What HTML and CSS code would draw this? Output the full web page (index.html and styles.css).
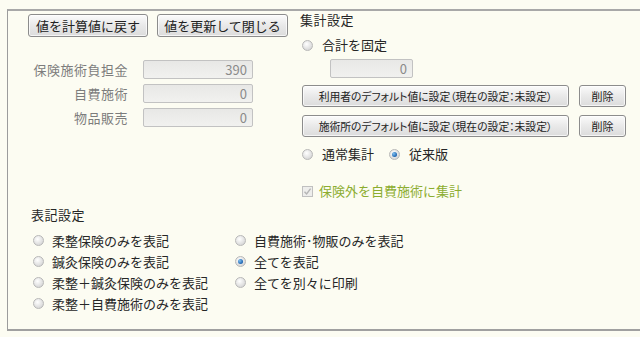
FILE: index.html
```html
<!DOCTYPE html>
<html lang="ja">
<head>
    <meta charset="UTF-8">
    <title>集計設定</title>
    <link rel="stylesheet" href="styles.css">
</head>
<body>

    <div class="frame">
        <div class="top">
            <!-- 左側：操作ボタンと金額 -->
            <div class="left">
                <div class="actions">
                    <button class="btn btn-reset">値を計算値に戻す</button>
                    <button class="btn btn-close">値を更新して閉じる</button>
                </div>

                <div class="fields">
                    <div class="field">
                        <label>保険施術負担金</label>
                        <input class="amount" type="text" value="390" disabled>
                    </div>
                    <div class="field">
                        <label>自費施術</label>
                        <input class="amount" type="text" value="0" disabled>
                    </div>
                    <div class="field">
                        <label>物品販売</label>
                        <input class="amount" type="text" value="0" disabled>
                    </div>
                </div>
            </div>

            <!-- 右側：集計設定 -->
            <div class="right">
                <div class="heading">集計設定</div>

                <label class="radio"><span class="dot"></span>合計を固定</label>
                <input class="amount total" type="text" value="0" disabled>

                <div class="default-row">
                    <button class="btn btn-wide">利用者のデフォルト値に設定（現在の設定：未設定）</button>
                    <button class="btn btn-del">削除</button>
                </div>
                <div class="default-row">
                    <button class="btn btn-wide">施術所のデフォルト値に設定（現在の設定：未設定）</button>
                    <button class="btn btn-del">削除</button>
                </div>

                <div class="mode-row">
                    <label class="radio"><span class="dot"></span>通常集計</label>
                    <label class="radio"><span class="dot on"></span>従来版</label>
                </div>

                <label class="check">
                    <span class="box">
                        <svg width="9" height="9" viewBox="0 0 9 9"><path d="M1.5 4.8 L3.6 7 L7.6 1.6" fill="none" stroke="#b5b5b5" stroke-width="1.4"/></svg>
                    </span>保険外を自費施術に集計
                </label>
            </div>
        </div>

        <!-- 表記設定 -->
        <div class="notation">
            <div class="heading">表記設定</div>
            <div class="options">
                <label class="radio"><span class="dot"></span>柔整保険のみを表記</label>
                <label class="radio"><span class="dot"></span>自費施術･物販のみを表記</label>
                <label class="radio"><span class="dot"></span>鍼灸保険のみを表記</label>
                <label class="radio"><span class="dot on"></span>全てを表記</label>
                <label class="radio"><span class="dot"></span>柔整＋鍼灸保険のみを表記</label>
                <label class="radio"><span class="dot"></span>全てを別々に印刷</label>
                <label class="radio"><span class="dot"></span>柔整＋自費施術のみを表記</label>
            </div>
        </div>
    </div>

</body>
</html>
```

FILE: styles.css
```css
body {
    margin: 0;
    padding: 0;
    background-color: #fcfcf2;
    font-family: "Noto Sans CJK JP", sans-serif;
    font-size: 13px;
    color: #262626;
    overflow: hidden;
}

.frame {
    margin: 9px -20px 0 7px;
    height: 322px;
    box-sizing: border-box;
    border-left: 1px solid #9c9c9c;
    border-top: 2px solid #a8a8a8;
    border-bottom: 2px solid #a0a0a0;
}

.top {
    display: flex;
}

.left {
    width: 272px;
    padding: 3px 0 0 20px;
}

.actions {
    display: flex;
    gap: 9px;
}

.btn {
    height: 23px;
    padding: 0;
    font-family: inherit;
    font-size: 13px;
    color: #222;
    border: 1px solid #8c8c8c;
    border-radius: 3px;
    background: linear-gradient(#fbfbfb, #e9e9e9 50%, #dcdcdc);
    box-shadow: inset 0 0 0 1px rgba(255, 255, 255, 0.7);
}

.btn-reset {
    width: 120px;
}

.btn-close {
    width: 131px;
}

.fields {
    margin-top: 23px;
    display: flex;
    flex-direction: column;
    gap: 5px;
}

.field {
    display: flex;
    align-items: center;
    gap: 15px;
}

.field label {
    width: 100px;
    text-align: right;
    color: #7c7c7c;
    line-height: 19px;
    letter-spacing: 0.5px;
}

.amount {
    width: 110px;
    height: 19px;
    box-sizing: border-box;
    margin: 0;
    padding: 0 5px 0 0;
    font-family: inherit;
    font-size: 13px;
    text-align: right;
    color: #8a8a8a;
    border: 1px solid #c2c2c2;
    border-radius: 2px;
    background: linear-gradient(#e8e8e6, #f1f1ef);
}

.right {
    flex: 1;
}

.heading {
    line-height: 18px;
    letter-spacing: 0.5px;
}

.radio {
    display: flex;
    align-items: center;
    gap: 9px;
    line-height: 18px;
    margin-left: 2px;
}

.dot {
    width: 11px;
    height: 11px;
    box-sizing: border-box;
    border-radius: 50%;
    border: 1px solid #b8b8b8;
    background: radial-gradient(circle at 40% 35%, #ffffff, #e0e0e0 60%, #cbcbcb);
    display: flex;
    align-items: center;
    justify-content: center;
}

.dot.on::after {
    content: "";
    width: 5px;
    height: 5px;
    border-radius: 50%;
    background: radial-gradient(circle at 35% 35%, #7fc0f0, #1f64b0 70%);
}

.right .radio:first-of-type {
    margin-top: 7px;
}

.total {
    display: block;
    width: 83px;
    margin: 5px 0 0 30px;
}

.default-row {
    display: flex;
    gap: 10px;
    margin-top: 7px;
    margin-left: 2px;
}

.default-row + .default-row {
    margin-top: 8px;
}

.btn-wide {
    width: 267px;
    height: 22px;
    font-size: 10.8px;
    font-feature-settings: "palt";
}

.btn-del {
    width: 47px;
    height: 22px;
    font-size: 11px;
}

.mode-row {
    display: flex;
    gap: 13px;
    margin-top: 8px;
}

.mode-row .radio:first-of-type {
    margin-top: 0;
}

.check {
    display: flex;
    align-items: center;
    gap: 6px;
    margin: 19px 0 0 2px;
    line-height: 18px;
    color: #8cad2f;
}

.box {
    width: 11px;
    height: 11px;
    box-sizing: border-box;
    border: 1px solid #c0c0c0;
    background: #eeeeec;
    display: flex;
    align-items: center;
    justify-content: center;
}

.notation {
    margin-top: 6px;
    padding-left: 23px;
}

.options {
    margin-top: 6px;
    display: grid;
    grid-template-columns: 202px auto;
    grid-auto-rows: 21px;
    align-items: center;
}

.options .radio {
    margin-left: 2px;
    gap: 8px;
}
```
